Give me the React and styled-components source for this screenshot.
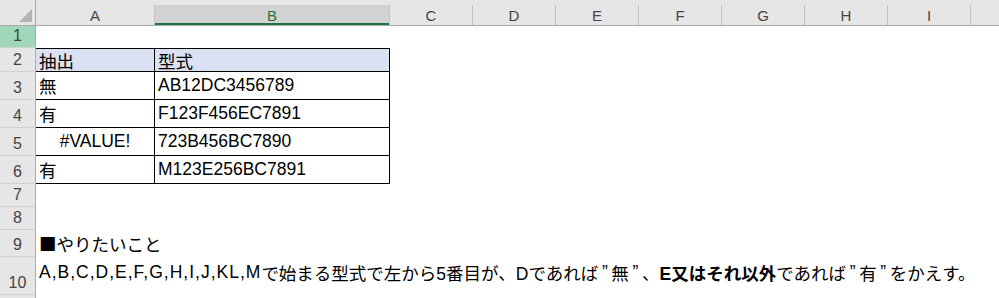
import React from "react";
import styled, { createGlobalStyle } from "styled-components";

const GlobalStyle = createGlobalStyle`
  html, body {
    margin: 0;
    padding: 0;
    background: #ffffff;
    overflow: hidden;
  }
`;

const Sheet = styled.div`
  width: 999px;
  height: 298px;
  overflow: hidden;
  font-family: "Liberation Sans", "Noto Sans CJK JP", sans-serif;
  color: #000;
`;

const SheetRow = styled.div`
  display: flex;
  height: ${(p) => p.$h}px;
  flex-shrink: 0;
`;

const HeadRow = styled.div`
  display: flex;
  height: 26px;
  background: #e6e6e6;
  border-bottom: 1px solid #ababab;
  box-sizing: border-box;
`;

const Corner = styled.div`
  width: 36px;
  flex-shrink: 0;
  display: flex;
  align-items: flex-end;
  justify-content: flex-end;
  padding: 0 2px 2px 0;
  box-sizing: border-box;
  border-right: 1px solid #ababab;
`;

const ColHead = styled.div`
  width: ${(p) => p.$w}px;
  flex-shrink: 0;
  padding-top: 5px;
  box-sizing: border-box;
  display: flex;
`;

const ColFiller = styled.div`
  flex: 1;
`;

const ColLabel = styled.div`
  flex: 1;
  display: flex;
  align-items: center;
  justify-content: center;
  font-size: 15px;
  color: ${(p) => (p.$active ? "#217346" : "#444")};
  background: ${(p) => (p.$active ? "#d2d2d2" : "transparent")};
  border-right: 1px solid #c3c3c3;
  box-shadow: ${(p) => (p.$active ? "inset 0 -2px 0 #217346" : "none")};
`;

const RowHead = styled.div`
  width: 36px;
  flex-shrink: 0;
  box-sizing: border-box;
  display: flex;
  align-items: flex-end;
  justify-content: center;
  padding-bottom: 3px;
  font-size: 16px;
  line-height: 16px;
  color: #444;
  background: ${(p) => (p.$active ? "#a0d7b9" : "#e6e6e6")};
  border-right: 1px solid #ababab;
  border-bottom: 1px solid #d0d0d0;
`;

const Cell = styled.div`
  width: ${(p) => p.$w}px;
  flex-shrink: 0;
  box-sizing: border-box;
  display: flex;
  align-items: center;
  justify-content: ${(p) => (p.$center ? "center" : "flex-start")};
  padding: 0 3px;
  font-size: 17.5px;
  white-space: nowrap;
  background: ${(p) => (p.$fill ? "#d9e1f2" : "transparent")};
  border-right: ${(p) => (p.$boxed ? "1px solid #000" : "none")};
  border-bottom: ${(p) => (p.$boxed ? "1px solid #000" : "none")};
  border-top: ${(p) => (p.$top ? "1px solid #000" : "none")};
`;

const WideCell = styled.div`
  flex: 1;
  display: flex;
  align-items: center;
  padding: 0 3px ${(p) => p.$lift || 0}px;
  font-size: 17.5px;
  white-space: nowrap;
`;

const Latin = styled.span`
  letter-spacing: 1px;
`;

const Square = styled.span`
  font-family: "Noto Sans CJK JP", sans-serif;
`;

const Quote = styled.span`
  display: inline-block;
  width: 0.75em;
  text-align: center;
`;

const Strong = styled.span`
  font-weight: bold;
`;

const COLS = [
  { key: "A", w: 119 },
  { key: "B", w: 235 },
  { key: "C", w: 83 },
  { key: "D", w: 83 },
  { key: "E", w: 83 },
  { key: "F", w: 83 },
  { key: "G", w: 83 },
  { key: "H", w: 83 },
  { key: "I", w: 83 },
];

const TABLE = [
  { n: 2, h: 24, a: "抽出", b: "型式", fill: true, top: true },
  { n: 3, h: 28, a: "無", b: "AB12DC3456789" },
  { n: 4, h: 28, a: "有", b: "F123F456EC7891" },
  { n: 5, h: 28, a: "#VALUE!", b: "723B456BC7890", center: true },
  { n: 6, h: 28, a: "有", b: "M123E256BC7891" },
];

const Blank = ({ n, h }) => (
  <SheetRow $h={h}>
    <RowHead $active={n === 1}>{n}</RowHead>
  </SheetRow>
);

export default function App() {
  return (
    <Sheet>
      <GlobalStyle />
      <HeadRow>
        <Corner>
          <svg width="14" height="14" viewBox="0 0 14 14">
            <polygon points="13,0 13,13 0,13" fill="#b4b4b4" />
          </svg>
        </Corner>
        {COLS.map((c) => (
          <ColHead key={c.key} $w={c.w}>
            <ColLabel $active={c.key === "B"}>{c.key}</ColLabel>
          </ColHead>
        ))}
        <ColFiller />
      </HeadRow>

      <Blank n={1} h={22} />

      {TABLE.map((r) => (
        <SheetRow key={r.n} $h={r.h}>
          <RowHead>{r.n}</RowHead>
          <Cell $w={119} $boxed $top={r.top} $fill={r.fill} $center={r.center}>
            {r.a}
          </Cell>
          <Cell $w={235} $boxed $top={r.top} $fill={r.fill}>
            {r.b}
          </Cell>
        </SheetRow>
      ))}

      <Blank n={7} h={23} />
      <Blank n={8} h={23} />

      <SheetRow $h={27}>
        <RowHead>9</RowHead>
        <WideCell>
          <Square>■</Square>やりたいこと
        </WideCell>
      </SheetRow>

      <SheetRow $h={38}>
        <RowHead>10</RowHead>
        <WideCell $lift={8}>
          <Latin>A,B,C,D,E,F,G,H,I,J,KL,M</Latin>で始まる型式で左から5番目が、Dであれば
          <Quote>”</Quote>無<Quote>”</Quote>、<Strong>E又はそれ以外</Strong>であれば
          <Quote>”</Quote>有<Quote>”</Quote>をかえす。
        </WideCell>
      </SheetRow>

      <Blank n={11} h={23} />
    </Sheet>
  );
}
